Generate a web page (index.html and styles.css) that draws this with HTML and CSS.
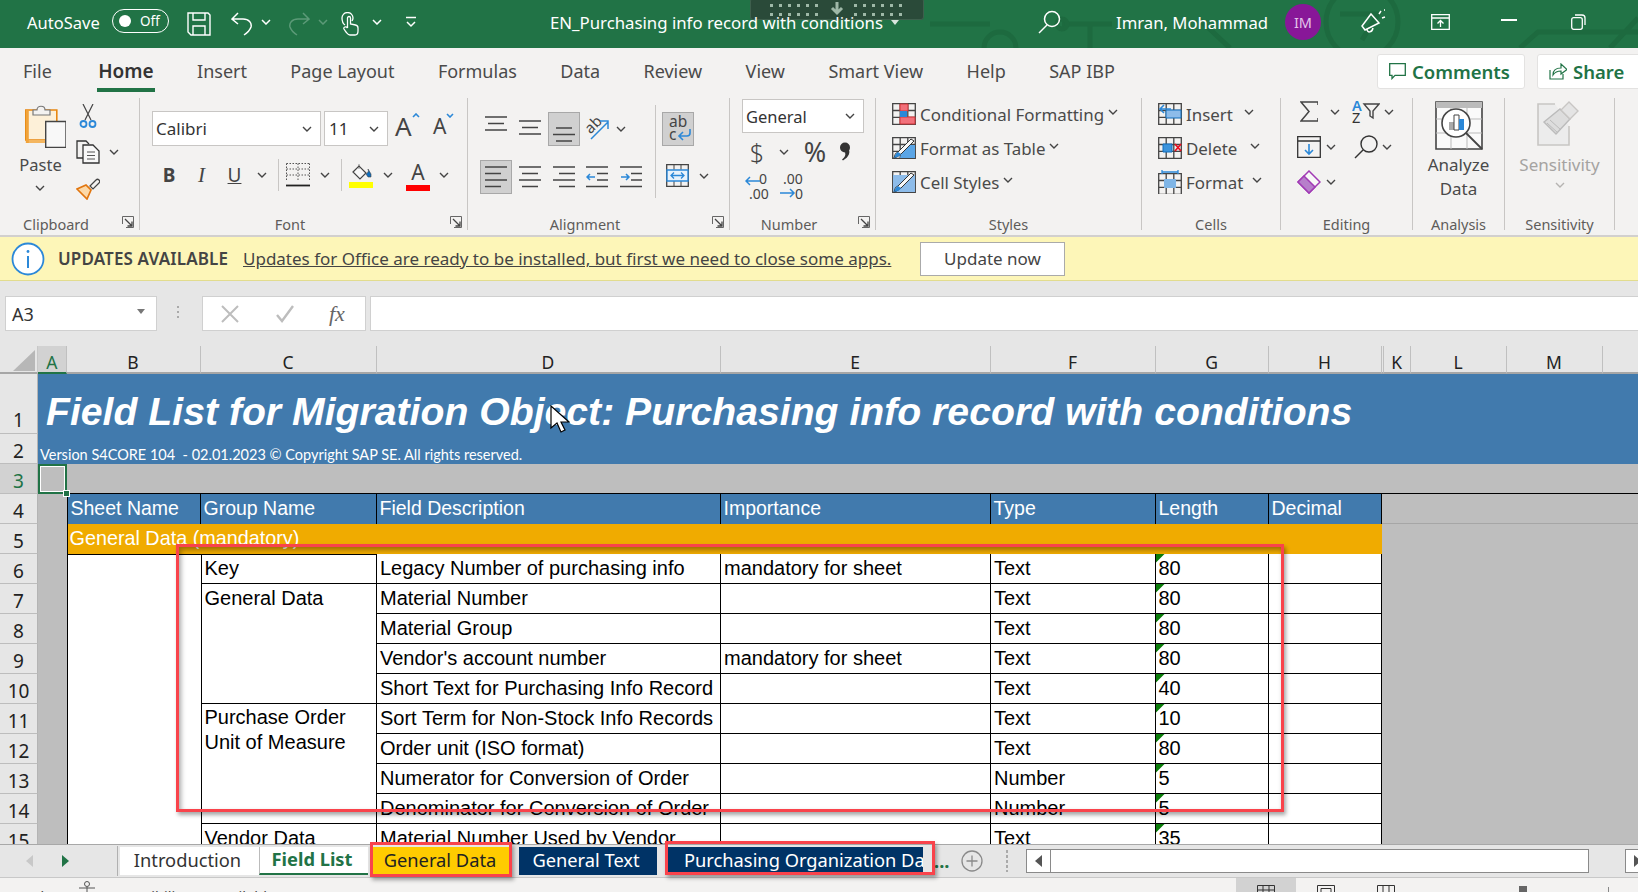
FILE: index.html
```html
<!DOCTYPE html>
<html lang="en">
<head>
<meta charset="utf-8">
<title>EN_Purchasing info record with conditions</title>
<link rel="stylesheet" href="styles.css">
</head>
<body>
<svg class="defs" width="0" height="0" aria-hidden="true">
  <symbol id="chev" viewBox="0 0 10 6"><path d="M1 1l4 4 4-4" fill="none" stroke="#444" stroke-width="1.4"/></symbol>
  <symbol id="chevw" viewBox="0 0 10 6"><path d="M1 1l4 4 4-4" fill="none" stroke="#fff" stroke-width="1.5"/></symbol>
  <symbol id="launch" viewBox="0 0 12 12"><path d="M.5 8V.5H11.5V11.500H4" fill="none" stroke="#666" stroke-width="1"/><path d="M3 3l7 7M10 5.500V10H5.500" fill="none" stroke="#444" stroke-width="1.300"/></symbol>
  <symbol id="gridi" viewBox="0 0 24 22"><path d="M.7.7h22.600v20.600H.7zM.7 7.500h22.600M.7 14.300h22.600M8.200.7v20.600M15.800.7v20.600" fill="none" stroke="#444" stroke-width="1.300"/></symbol>
</svg>

<header class="titlebar">
  <svg class="circuit" viewBox="0 0 1638 48" aria-hidden="true"><g fill="none" stroke="#1d6a3f" stroke-width="5"><path d="M930 24h60M1062 24h50M1090 24v24M1200 20l30 28"/><circle cx="1000" cy="48" r="16"/><circle cx="1062" cy="24" r="5"/><circle cx="1362" cy="22" r="36"/><path d="M1340 14h38l-16 26M1520 48l18-16h100M1610 48l28-30"/></g></svg>
  <div class="dlpanel" aria-hidden="true"><span class="dots"></span><svg class="dlarrow" width="16" height="14" viewBox="0 0 16 14"><path d="M8 0v10M3 6l5 5 5-5" fill="none" stroke="#9fb8a8" stroke-width="3"/></svg><span class="dots"></span></div>
  <span class="autosave">AutoSave</span>
  <span class="toggle"><i class="knob"></i><b>Off</b></span>
  <svg class="q-save" width="24" height="24" viewBox="0 0 24 24"><path d="M1 1h20l2 2v20H4l-3-3zM6 1v7h12V1M6 23v-9h12v9" fill="none" stroke="#fff" stroke-width="1.400"/></svg>
  <svg class="q-undo" width="22" height="24" viewBox="0 0 22 24"><path d="M7 1L1 7l6 5M1 7h11c6 0 9 4 8 8-1 3-4 6-7 8" fill="none" stroke="#fff" stroke-width="1.500"/></svg>
  <svg class="q-ch1" width="10" height="6"><use href="#chevw"/></svg>
  <svg class="q-redo" width="22" height="24" viewBox="0 0 22 24"><path d="M15 1l6 6-6 5M21 7H10C4 7 1 11 2 15c1 3 4 6 7 8" fill="none" stroke="#5c9a78" stroke-width="1.500"/></svg>
  <svg class="q-ch2" width="10" height="6" viewBox="0 0 10 6"><path d="M1 1l4 4 4-4" fill="none" stroke="#5c9a78" stroke-width="1.500"/></svg>
  <svg class="q-touch" width="18" height="24" viewBox="0 0 18 24"><path d="M4 13C1 11 1 8 1 6a5.500 5.500 0 0 1 11 0c0 1-.3 2-1 3M6.500 16V6a1.500 1.500 0 0 1 3 0v6l5 1c2 .5 2.500 2 2.500 3v3c0 2-1 4-3 4H9c-2 0-3-2-4-3l-2-3c-1-2 2-3 3.500-1" fill="none" stroke="#fff" stroke-width="1.300"/></svg>
  <svg class="q-ch3" width="10" height="6"><use href="#chevw"/></svg>
  <svg class="q-cust" width="12" height="12" viewBox="0 0 12 12"><path d="M1 1.500h10" stroke="#fff" stroke-width="1.500"/><path d="M2 6l4 4 4-4" fill="none" stroke="#fff" stroke-width="1.500"/></svg>
  <span class="doc">EN_Purchasing info record with conditions</span>
  <svg class="q-tri" width="8" height="5" viewBox="0 0 8 5"><path d="M0 0h8L4 5z" fill="#d8e6de"/></svg>
  <svg class="q-search" width="23" height="24" viewBox="0 0 23 24"><circle cx="14" cy="9" r="7.500" fill="none" stroke="#fff" stroke-width="1.500"/><path d="M9 15l-8 8" stroke="#fff" stroke-width="1.500"/></svg>
  <span class="user">Imran, Mohammad</span>
  <span class="avatar">IM</span>
  <svg class="q-feed" width="25" height="26" viewBox="0 0 25 26"><path d="M10 5l8 9-14 7-3-4zM6 20c0 4 5 4 6-1" fill="none" stroke="#fff" stroke-width="1.500"/><path d="M18 5l2-3M21 9l3-1M23 1h1" stroke="#fff" stroke-width="1.500"/></svg>
  <svg class="q-disp" width="19" height="16" viewBox="0 0 19 16"><path d="M.7.7h17.600v14.600H.7zM.7 4h17.600" fill="none" stroke="#fff" stroke-width="1.300"/><path d="M9.500 13V6.500M6.500 9.500l3-3 3 3" fill="none" stroke="#fff" stroke-width="1.300"/></svg>
  <span class="q-min"></span>
  <svg class="q-rest" width="15" height="16" viewBox="0 0 15 16"><rect x=".7" y="3.700" width="10.600" height="11.600" rx="2" fill="none" stroke="#fff" stroke-width="1.300"/><path d="M4 1h7c2 0 3 1 3 3v7" fill="none" stroke="#fff" stroke-width="1.300"/></svg>
</header>

<nav class="tabs">
  <a class="tab">File</a><a class="tab active">Home</a><a class="tab">Insert</a><a class="tab">Page Layout</a><a class="tab">Formulas</a><a class="tab">Data</a><a class="tab">Review</a><a class="tab">View</a><a class="tab">Smart View</a><a class="tab">Help</a><a class="tab">SAP IBP</a>
  <button class="pill pill-comments"><svg width="17" height="17" viewBox="0 0 17 17"><path d="M.7.7h15.600v11.600H6L3 15.500v-3.200H.7z" fill="none" stroke="#217346" stroke-width="1.300"/></svg>Comments</button>
  <button class="pill pill-share"><svg width="18" height="17" viewBox="0 0 18 17"><path d="M1 7v9h13v-5M4 12c0-5 3-7 8-7V1l6 5.500L12 11V8c-3 0-6 1-8 4z" fill="none" stroke="#217346" stroke-width="1.200"/></svg>Share</button>
</nav>

<section class="ribbon">
  <div class="group g-clip">
    <div class="body clip-body">
      <div class="paste">
        <svg width="41" height="44" viewBox="0 0 41 44"><path d="M.8 6h31v30H.8z" fill="#fdf0d8" stroke="#e8870f" stroke-width="1.600"/><path d="M1 36h31v3H1z" fill="#f4b660"/><path d="M.8 6h3v33h-3z" fill="#f0a33a"/><path d="M8 11V6h4c0-5 8-5 8 0h5v5z" fill="#f3f2f1" stroke="#777" stroke-width="1.200"/><path d="M20.700 17.500H41v26H20.700z" fill="#f8f8f8" stroke="#444" stroke-width="1.400"/></svg>
        <span class="paste-t">Paste</span>
        <svg class="pch" width="10" height="6"><use href="#chev"/></svg>
      </div>
      <div class="clip-tools">
        <svg width="18" height="24" viewBox="0 0 18 24"><path d="M4 0l8 16M14 0L6 16" stroke="#444" stroke-width="1.200" fill="none"/><circle cx="4.500" cy="20" r="3" fill="none" stroke="#2b88d8" stroke-width="1.800"/><circle cx="13.500" cy="20" r="3" fill="none" stroke="#2b88d8" stroke-width="1.800"/></svg>
        <span></span>
        <svg width="25" height="24" viewBox="0 0 25 24"><path d="M7 18H1V1h9l3 3" fill="none" stroke="#333" stroke-width="1.300"/><path d="M7 5h10l6 6v12H7z" fill="#f8f8f8" stroke="#333" stroke-width="1.300"/><path d="M11 12h8M11 15.500h8M11 19h8" stroke="#555"/></svg>
        <svg width="10" height="6"><use href="#chev"/></svg>
        <svg width="24" height="23" viewBox="0 0 24 23"><path d="M1 12l10 10 4-9-5-5z" fill="#fcd9a8" stroke="#e1760f" stroke-width="1.700"/><path d="M14 9l6-6a2 2 0 0 1 3 3l-6 6z" fill="#f3f2f1" stroke="#444" stroke-width="1.200"/></svg>
        <span></span>
      </div>
    </div>
    <div class="foot"><span>Clipboard</span><svg class="launcher" width="12" height="12"><use href="#launch"/></svg></div>
  </div>

  <div class="group g-font">
    <div class="body font-body">
      <div class="font-top">
        <span class="sel sel-font">Calibri<svg width="10" height="6"><use href="#chev"/></svg></span>
        <span class="sel sel-size">11<svg width="10" height="6"><use href="#chev"/></svg></span>
        <span class="grow big">A<svg width="8" height="5" viewBox="0 0 8 5"><path d="M1 4l3-3 3 3" fill="none" stroke="#2b88d8" stroke-width="1.600"/></svg></span>
        <span class="grow small">A<svg width="8" height="5" viewBox="0 0 8 5"><path d="M1 1l3 3 3-3" fill="none" stroke="#2b88d8" stroke-width="1.600"/></svg></span>
      </div>
      <div class="font-bot">
        <b class="fb">B</b><i class="fi">I</i><u class="fu">U</u>
        <svg width="10" height="6"><use href="#chev"/></svg>
        <span class="vsep"></span>
        <svg width="24" height="24" viewBox="0 0 24 24"><path d="M.5.500h23M.5 6h23M.5 12h23M.5.5v18M12 .5v18M23.500.5v18" fill="none" stroke="#555" stroke-dasharray="1.500 1.500"/><path d="M0 22.500h24" stroke="#222" stroke-width="1.800"/></svg>
        <svg width="10" height="6"><use href="#chev"/></svg>
        <span class="vsep"></span>
        <svg width="24" height="25" viewBox="0 0 24 25"><path d="M4 9l6-6 7 7-6 6z" fill="#f8f8f8" stroke="#444" stroke-width="1.200"/><path d="M10 1v5M17 11c2-1 3-3 2-5l3 5v3h-3z" fill="#106ebe" stroke="#444" stroke-width=".6"/><path d="M0 19h24v6H0z" fill="#ff0"/></svg>
        <svg width="10" height="6"><use href="#chev"/></svg>
        <span class="fcolor">A</span>
        <svg width="10" height="6"><use href="#chev"/></svg>
      </div>
    </div>
    <div class="foot"><span>Font</span><svg class="launcher" width="12" height="12"><use href="#launch"/></svg></div>
  </div>

  <div class="group g-align">
    <div class="body align-body">
      <div class="align-left">
        <div class="a-row a-top">
          <svg class="at1" width="22" height="15" viewBox="0 0 22 15"><path d="M0 1h22M3 7.500h16M0 14h22" stroke="#444" stroke-width="1.300"/></svg>
          <svg class="at2" width="22" height="15" viewBox="0 0 22 15"><path d="M0 1h22M3 7.500h16M0 14h22" stroke="#444" stroke-width="1.300"/></svg>
          <span class="on"><svg width="22" height="15" viewBox="0 0 22 15"><path d="M3 1h16M0 7.500h22M3 14h16" stroke="#444" stroke-width="1.300"/></svg></span>
          <svg class="at2" width="26" height="26" viewBox="0 0 26 26"><text x="1" y="17" class="ori" transform="rotate(-45 8 12)">ab</text><path d="M7 25L24 8M16 7h8v8" fill="none" stroke="#2b88d8" stroke-width="1.500"/></svg>
          <svg width="10" height="6"><use href="#chev"/></svg>
        </div>
        <div class="a-row a-bot">
          <span class="on"><svg width="22" height="22" viewBox="0 0 22 22"><path d="M0 1h22M0 7.500h16M0 14h22M0 20.500h16" stroke="#444" stroke-width="1.300"/></svg></span>
          <svg width="22" height="22" viewBox="0 0 22 22"><path d="M0 1h22M3 7.500h16M0 14h22M3 20.500h16" stroke="#444" stroke-width="1.300"/></svg>
          <svg width="22" height="22" viewBox="0 0 22 22"><path d="M0 1h22M6 7.500h16M0 14h22M6 20.500h16" stroke="#444" stroke-width="1.300"/></svg>
          <svg width="22" height="22" viewBox="0 0 22 22"><path d="M0 1h22M11 7.500h11M11 14h11M0 20.500h22" stroke="#444" stroke-width="1.300"/><path d="M9 11H1M4 8l-3 3 3 3" fill="none" stroke="#2b88d8" stroke-width="1.500"/></svg>
          <svg width="22" height="22" viewBox="0 0 22 22"><path d="M0 1h22M11 7.500h11M11 14h11M0 20.500h22" stroke="#444" stroke-width="1.300"/><path d="M1 11h8M6 8l3 3-3 3" fill="none" stroke="#2b88d8" stroke-width="1.500"/></svg>
        </div>
      </div>
      <span class="vsep tall"></span>
      <div class="align-right">
        <span class="on wrap"><span class="wrap-ab">ab<br>c</span><svg width="14" height="12" viewBox="0 0 14 12"><path d="M13 0v4c0 2-1 3-3 3H2M6 3L2 7l4 4" fill="none" stroke="#2b88d8" stroke-width="1.600"/></svg></span>
        <div class="merge">
          <svg width="23" height="23" viewBox="0 0 23 23"><path d="M.7.7h21.600v21.600H.7z" fill="none" stroke="#444" stroke-width="1.300"/><path d="M8 .7v5M15 .7v5M8 17v5M15 17v5" stroke="#444"/><path d="M1 6h21v11H1z" fill="#e8f2fb" stroke="#2b88d8" stroke-width="1.400"/><path d="M5 11.500h13M8 8.500l-3 3 3 3M15 8.500l3 3-3 3" fill="none" stroke="#2b88d8" stroke-width="1.300"/></svg>
          <svg width="10" height="6"><use href="#chev"/></svg>
        </div>
      </div>
    </div>
    <div class="foot"><span>Alignment</span><svg class="launcher" width="12" height="12"><use href="#launch"/></svg></div>
  </div>

  <div class="group g-num">
    <div class="body num-body">
      <span class="sel sel-num">General<svg width="10" height="6"><use href="#chev"/></svg></span>
      <div class="num-row">
        <span class="sym dollar">$</span>
        <svg width="10" height="6"><use href="#chev"/></svg>
        <span class="sym pct">%</span>
        <svg width="12" height="19" viewBox="0 0 12 19"><circle cx="6" cy="5.500" r="5" fill="#333"/><path d="M9 6c3 4 1 9-5 12.500l-1-1c3-2 4-5 3-7z" fill="#333"/></svg>
      </div>
      <div class="dec-row">
        <svg width="26" height="27" viewBox="0 0 26 27"><text x="14" y="11" class="dec">0</text><text x="4" y="26" class="dec">.00</text><path d="M15 8H1M5 4L1 8l4 4" fill="none" stroke="#2b88d8" stroke-width="1.500"/></svg>
        <svg width="26" height="27" viewBox="0 0 26 27"><text x="4" y="11" class="dec">.00</text><text x="16" y="26" class="dec">0</text><path d="M1 20h14M11 16l4 4-4 4" fill="none" stroke="#2b88d8" stroke-width="1.500"/></svg>
      </div>
    </div>
    <div class="foot"><span>Number</span><svg class="launcher" width="12" height="12"><use href="#launch"/></svg></div>
  </div>

  <div class="group g-styles">
    <div class="body list">
      <div class="li"><svg width="24" height="22" viewBox="0 0 24 22"><use href="#gridi"/><path d="M8 1h8v7H8zM8 14h15v7H8z" fill="#f2707a" stroke="#d13438"/><path d="M8 8h7v6H8z" fill="#2b88d8"/></svg><span>Conditional Formatting</span><svg width="10" height="6"><use href="#chev"/></svg></div>
      <div class="li"><svg width="24" height="22" viewBox="0 0 24 22"><use href="#gridi"/><path d="M12 8h11v13H8z" fill="#5aa5e6"/><path d="M22 4L9 17c-2 1-3 3-7 4 1-3 1-5 4-6L19 2z" fill="#f8f8f8" stroke="#333"/><path d="M2 21c1-3 2-5 4-6l3 2c-1 2-3 3-7 4z" fill="#2b88d8"/></svg><span>Format as Table</span><svg width="10" height="6"><use href="#chev"/></svg></div>
      <div class="li"><svg width="24" height="22" viewBox="0 0 24 22"><use href="#gridi"/><path d="M1 4h22v17H1z" fill="#8dbcea"/><path d="M22 4L9 17c-2 1-3 3-7 4 1-3 1-5 4-6L19 2z" fill="#f8f8f8" stroke="#333"/><path d="M2 21c1-3 2-5 4-6l3 2c-1 2-3 3-7 4z" fill="#2b88d8"/></svg><span>Cell Styles</span><svg width="10" height="6"><use href="#chev"/></svg></div>
    </div>
    <div class="foot"><span>Styles</span></div>
  </div>

  <div class="group g-cells">
    <div class="body list">
      <div class="li"><svg width="24" height="22" viewBox="0 0 24 22"><use href="#gridi"/><path d="M8 7h15v8H8z" fill="#8dbcea" stroke="#106ebe"/><path d="M13 6H2M6 2L2 6l4 4" fill="none" stroke="#2b88d8" stroke-width="1.600"/></svg><span class="t-ins">Insert</span><svg width="10" height="6"><use href="#chev"/></svg></div>
      <div class="li"><svg width="24" height="22" viewBox="0 0 24 22"><use href="#gridi"/><path d="M5 7h9v8H5z" fill="#3d94dc" stroke="#106ebe"/><path d="M17 7l6 7M23 7l-6 7" stroke="#e81123" stroke-width="1.800"/></svg><span class="t-del">Delete</span><svg width="10" height="6"><use href="#chev"/></svg></div>
      <div class="li"><svg width="24" height="24" viewBox="0 0 24 24"><g transform="translate(0 2)"><use href="#gridi"/></g><path d="M6 9h12v9H6z" fill="#7fb5e6"/><path d="M4 2h16M4 0v4M20 0v4" stroke="#2b88d8" stroke-width="1.300"/></svg><span class="t-fmt">Format</span><svg width="10" height="6"><use href="#chev"/></svg></div>
    </div>
    <div class="foot"><span>Cells</span></div>
  </div>

  <div class="group g-edit">
    <div class="body edit-body">
      <div class="e-row e1">
        <svg width="18" height="21" viewBox="0 0 18 21"><path d="M18 4V1H1l8 9.500L1 20h17v-3" fill="none" stroke="#444" stroke-width="1.500"/></svg>
        <svg width="10" height="6"><use href="#chev"/></svg>
        <svg width="28" height="24" viewBox="0 0 28 24"><text x="0" y="11" class="az blue">A</text><text x="0" y="23" class="az">Z</text><path d="M12 4h15l-6 7v7l-3-2v-5z" fill="none" stroke="#444" stroke-width="1.400"/></svg>
        <svg width="10" height="6"><use href="#chev"/></svg>
      </div>
      <div class="e-row e2">
        <svg width="24" height="22" viewBox="0 0 24 22"><path d="M.7.7h22.600v20.600H.7zM.7 5h22.600" fill="none" stroke="#333" stroke-width="1.300"/><path d="M12 8v10M8 14l4 4 4-4" fill="none" stroke="#2b88d8" stroke-width="1.600"/></svg>
        <svg width="10" height="6"><use href="#chev"/></svg>
        <span></span>
        <svg width="24" height="24" viewBox="0 0 24 24"><circle cx="15" cy="9" r="8" fill="none" stroke="#333" stroke-width="1.400"/><path d="M9 15l-8 8" stroke="#333" stroke-width="1.500"/></svg>
        <svg width="10" height="6"><use href="#chev"/></svg>
      </div>
      <div class="e-row e2">
        <svg width="24" height="24" viewBox="0 0 24 24"><path d="M12 1l11 11-11 11L1 12z" fill="#f8f8f8" stroke="#a13ab5" stroke-width="1.500"/><path d="M1 12l6-6 11 11-6 6z" fill="#b77fcb" stroke="#a13ab5" stroke-width="1.500"/></svg>
        <svg width="10" height="6"><use href="#chev"/></svg>
      </div>
    </div>
    <div class="foot"><span>Editing</span></div>
  </div>

  <div class="group g-an">
    <div class="body big-body">
      <svg width="48" height="49" viewBox="0 0 48 49"><path d="M1 1h46v47H1z" fill="#fafafa" stroke="#444" stroke-width="1.600"/><path d="M1 1h46v6H1z" fill="#bbb"/><path d="M1 18h46M1 32h46M16 7v41M32 7v41" stroke="#bbb"/><circle cx="21" cy="22" r="14" fill="#fff" stroke="#444" stroke-width="1.600"/><path d="M14 21h5v8h-5z" fill="#aaa"/><path d="M19 14h5v15h-5z" fill="#fff" stroke="#444"/><path d="M24 18h5v11h-5z" fill="#2b88d8"/><path d="M31 32l16 16" stroke="#444" stroke-width="1.800"/></svg>
      <span class="big-t">Analyze<br>Data</span>
    </div>
    <div class="foot"><span>Analysis</span></div>
  </div>

  <div class="group g-sens">
    <div class="body big-body">
      <svg width="42" height="45" viewBox="0 0 42 45"><path d="M18 3H1v41h31V25" fill="#ececec" stroke="#c8c6c4" stroke-width="1.600"/><path d="M7 21L23 8l10 10-14 15z" fill="#ddd" stroke="#bbb" stroke-width="1.400"/><path d="M10 22l11 10M13 19l11 10" stroke="#bbb"/><path d="M24 9l8-8 9 9-8 8z" fill="#e4e4e4" stroke="#c8c6c4" stroke-width="1.400"/></svg>
      <span class="big-t muted">Sensitivity</span>
      <svg class="sens-ch" width="10" height="6" viewBox="0 0 10 6"><path d="M1 1l4 4 4-4" fill="none" stroke="#b5b3b1" stroke-width="1.400"/></svg>
    </div>
    <div class="foot"><span>Sensitivity</span></div>
  </div>
</section>

<section class="notice">
  <svg width="34" height="34" viewBox="0 0 34 34"><circle cx="17" cy="17" r="15.500" fill="#fff" stroke="#2b88d8" stroke-width="1.800"/><path d="M17 14v12" stroke="#2b88d8" stroke-width="2"/><circle cx="17" cy="9.500" r="1.400" fill="#2b88d8"/></svg>
  <strong>UPDATES AVAILABLE</strong>
  <a class="notice-link">Updates for Office are ready to be installed, but first we need to close some apps.</a>
  <button class="notice-btn">Update now</button>
</section>

<section class="formula">
  <div class="namebox"><span>A3</span><svg width="8" height="5" viewBox="0 0 8 5"><path d="M0 0h8L4 5z" fill="#777"/></svg></div>
  <span class="fdots"></span>
  <div class="fxbox">
    <svg width="18" height="18" viewBox="0 0 18 18"><path d="M1 1l16 16M17 1L1 17" stroke="#bdbdbd" stroke-width="2"/></svg>
    <svg width="20" height="18" viewBox="0 0 20 18"><path d="M2 10l5 6L18 1" fill="none" stroke="#bdbdbd" stroke-width="2.400"/></svg>
    <i class="fx">fx</i>
  </div>
  <div class="finput"></div>
</section>

<main class="sheet">
  <div class="corner"><i></i></div>
  <div class="ch-cell ch-on">A</div><div class="ch-cell">B</div><div class="ch-cell">C</div><div class="ch-cell">D</div><div class="ch-cell">E</div><div class="ch-cell">F</div><div class="ch-cell">G</div><div class="ch-cell">H</div><div class="ch-cell"></div><div class="ch-cell">K</div><div class="ch-cell">L</div><div class="ch-cell">M</div><div class="ch-cell ch-end"></div>

  <div class="rh rh-1">1</div>
  <div class="banner title">Field List for Migration Object: Purchasing info record with conditions</div>
  <div class="rh">2</div>
  <div class="banner version">Version S4CORE 104&nbsp; - 02.01.2023 © Copyright SAP SE. All rights reserved.</div>
  <div class="rh rh-on">3</div>
  <div class="a3"><i></i></div>
  <div class="row3"></div>
  <div class="rh">4</div>
  <div class="gray-a"></div>
  <div class="hd hb">Sheet Name</div><div class="hd">Group Name</div><div class="hd">Field Description</div><div class="hd">Importance</div><div class="hd">Type</div><div class="hd">Length</div><div class="hd">Decimal</div>
  <div class="gray-r4"></div>
  <div class="rh">5</div>
  <div class="orange">General Data (mandatory)</div>
  <div class="gray-r"></div>
  <div class="blank-b"></div>

  <div class="grp g1">Key</div>
  <div class="grp g2">General Data</div>
  <div class="grp g3">Purchase Order<br>Unit of Measure</div>
  <div class="grp g4">Vendor Data</div>

  <div class="rh">6</div><div class="c cd">Legacy Number of purchasing info</div><div class="c ce">mandatory for sheet</div><div class="c cf">Text</div><div class="c cg">80</div><div class="c cx"></div>
  <div class="rh">7</div><div class="c cd">Material Number</div><div class="c ce"></div><div class="c cf">Text</div><div class="c cg">80</div><div class="c cx"></div>
  <div class="rh">8</div><div class="c cd">Material Group</div><div class="c ce"></div><div class="c cf">Text</div><div class="c cg">80</div><div class="c cx"></div>
  <div class="rh">9</div><div class="c cd">Vendor's account number</div><div class="c ce">mandatory for sheet</div><div class="c cf">Text</div><div class="c cg">80</div><div class="c cx"></div>
  <div class="rh">10</div><div class="c cd">Short Text for Purchasing Info Record</div><div class="c ce"></div><div class="c cf">Text</div><div class="c cg">40</div><div class="c cx"></div>
  <div class="rh">11</div><div class="c cd">Sort Term for Non-Stock Info Records</div><div class="c ce"></div><div class="c cf">Text</div><div class="c cg">10</div><div class="c cx"></div>
  <div class="rh">12</div><div class="c cd">Order unit (ISO format)</div><div class="c ce"></div><div class="c cf">Text</div><div class="c cg">80</div><div class="c cx"></div>
  <div class="rh">13</div><div class="c cd">Numerator for Conversion of Order</div><div class="c ce"></div><div class="c cf">Number</div><div class="c cg">5</div><div class="c cx"></div>
  <div class="rh">14</div><div class="c cd">Denominator for Conversion of Order</div><div class="c ce"></div><div class="c cf">Number</div><div class="c cg">5</div><div class="c cx"></div>
  <div class="rh">15</div><div class="c cd">Material Number Used by Vendor</div><div class="c ce"></div><div class="c cf">Text</div><div class="c cg">35</div><div class="c cx"></div>
</main>

<footer class="sheetbar">
  <svg class="nav-l" width="7" height="12" viewBox="0 0 7 12"><path d="M7 0v12L0 6z" fill="#c8c8c8"/></svg>
  <svg class="nav-r" width="7" height="12" viewBox="0 0 7 12"><path d="M0 0v12l7-6z" fill="#217346"/></svg>
  <span class="bar-sep"></span>
  <span class="stab st-intro">Introduction</span>
  <span class="stab st-field">Field List</span>
  <span class="stab st-gen">General Data</span>
  <span class="stab st-txt">General Text</span>
  <span class="stab st-org"><span>Purchasing Organization Data</span></span>
  <span class="more">...</span>
  <svg class="addsheet" width="22" height="22" viewBox="0 0 22 22"><circle cx="11" cy="11" r="10" fill="none" stroke="#8a8a8a" stroke-width="1.300"/><path d="M11 5.500v11M5.500 11h11" stroke="#8a8a8a" stroke-width="1.300"/></svg>
  <span class="vdots"></span>
  <div class="hscroll"><span class="hs-btn"><svg width="7" height="12" viewBox="0 0 7 12"><path d="M7 0v12L0 6z" fill="#555"/></svg></span></div>
  <span class="hs-end"><svg width="7" height="12" viewBox="0 0 7 12"><path d="M0 0v12l7-6z" fill="#555"/></svg></span>
</footer>

<footer class="status">
  <span class="st-ready">Ready</span>
  <svg class="st-acc" width="18" height="14" viewBox="0 0 18 14"><circle cx="9" cy="3" r="2.500" fill="none" stroke="#555"/><path d="M1 7h16M9 6v8" stroke="#555"/></svg>
  <span class="st-text">Accessibility: Unavailable</span>
  <span class="view view-on"><svg width="18" height="14" viewBox="0 0 18 14"><path d="M.5.5h17v13H.5zM.5 5h17M6 .5v13M12 .5v13" fill="none" stroke="#333"/></svg></span>
  <span class="view"><svg width="18" height="14" viewBox="0 0 18 14"><path d="M.5.5h17v13H.5zM4 3.500h10v10H4z" fill="none" stroke="#333"/></svg></span>
  <span class="view"><svg width="18" height="14" viewBox="0 0 18 14"><path d="M.5.5h17v13H.5zM6 .5v13M12 .5v13" fill="none" stroke="#333"/></svg></span>
  <span class="knob2"></span>
  <span class="tick"></span>
</footer>

<div class="hl hl-main"></div>
<div class="hl hl-tab1"></div>
<div class="hl hl-tab2"></div>
<svg class="cursor" width="20" height="28" viewBox="0 0 20 28" aria-hidden="true"><path d="M1 1v22l6-5 4 9 4-2-4-8h8z" fill="#fff" stroke="#000" stroke-width="1.200"/></svg>
</body>
</html>
```
FILE: styles.css
```css
* { box-sizing: border-box; }
html, body { margin: 0; padding: 0; }
body {
  position: relative;
  width: 1638px;
  height: 892px;
  overflow: hidden;
  background: #e6e6e6;
  font-family: "Noto Sans", "Open Sans", sans-serif;
  color: #444;
}
.defs { position: absolute; }
svg { display: block; flex: none; }

/* title bar */
.titlebar {
  position: relative;
  height: 48px;
  background: #217346;
  color: #fff;
  display: flex;
  align-items: center;
  overflow: hidden;
  padding-bottom: 4px;
}
.titlebar > * { flex: none; }
.titlebar > *:not(.circuit):not(.dlpanel) { position: relative; }
.circuit { position: absolute; left: 0; top: 0; width: 1638px; height: 48px; }
.dlpanel {
  position: absolute;
  left: 750px;
  top: -2px;
  width: 174px;
  height: 22px;
  background: #2a4a39;
  border: 1px solid #3e5f4d;
  border-radius: 3px;
  display: flex;
  align-items: center;
  justify-content: center;
  gap: 6px;
}
.dots {
  width: 56px;
  height: 16px;
  background-image: radial-gradient(circle, #9fb8a8 1.700px, transparent 2px);
  background-size: 9px 9px;
}
.autosave { margin-left: 27px; width: 76px; font-size: 16.500px; white-space: nowrap; }
.toggle {
  margin-left: 9px; width: 57px; height: 24px; margin-bottom: 2px;
  border: 1.300px solid #fff; border-radius: 12px;
  display: flex; align-items: center; padding-left: 6px;
}
.knob { width: 12px; height: 12px; border-radius: 50%; background: #fff; }
.toggle b { font-weight: 400; font-size: 13.500px; margin-left: 9px; }
.q-save { margin-left: 18px; margin-top: 4px; }
.q-undo { margin-left: 20px; margin-top: 4px; }
.q-ch1 { margin-left: 8px; }
.q-redo { margin-left: 17px; margin-top: 4px; }
.q-ch2 { margin-left: 8px; }
.q-touch { margin-left: 13px; margin-top: 4px; }
.q-ch3 { margin-left: 13px; }
.q-cust { margin-left: 23px; }
.doc { margin-left: 133px; width: 333px; font-size: 16.800px; white-space: nowrap; }
.q-tri { margin-left: 8px; }
.q-search { margin-left: 139px; }
.user { margin-left: 55px; width: 152px; font-size: 16.700px; white-space: nowrap; }
.avatar {
  margin-left: 17px; width: 36px; height: 36px; border-radius: 50%;
  background: #881798; color: #e3c4ea; font-size: 14.500px;
  display: flex; align-items: center; justify-content: center;
}
.q-feed { margin-left: 40px; }
.q-disp { margin-left: 45px; }
.q-min { margin-left: 51px; width: 16px; height: 2px; background: #fff; margin-bottom: 4px; }
.q-rest { margin-left: 54px; }

/* tabs */
.tabs {
  height: 48px;
  background: #f3f2f1;
  display: flex;
  align-items: center;
  padding-left: 23px;
  gap: 43.400px;
  font-size: 18px;
  color: #4a4a4a;
  position: relative;
}
.tabs > * { flex: none; }
.tab { white-space: nowrap; position: relative; line-height: 30px; margin-top: -3px; }
.tab.active { font-weight: 600; color: #333; font-size: 19px; margin-left: 3px; }
.tab.active::after {
  content: ""; position: absolute; left: -1px; right: -1px; top: 32px; height: 4px; background: #217346;
}
.pill {
  height: 35px; background: #fff; border: 1px solid #e3e2e1; border-radius: 3px;
  font: 600 18.500px "Noto Sans", sans-serif; color: #217346;
  display: flex; align-items: center; gap: 6px; margin-top: -1px;
}
.pill-comments { width: 148px; margin-left: auto; padding-left: 11px; }
.pill-share { width: 110px; margin-left: -31.400px; margin-right: -9px; padding-left: 11px; }

/* ribbon */
.ribbon {
  height: 141px;
  background: #f3f2f1;
  border-bottom: 2px solid #d2d0ce;
  display: flex;
  padding-top: 2px;
}
.group {
  height: 132px;
  border-right: 1px solid #c8c6c4;
  display: flex;
  flex-direction: column;
  flex: none;
}
.body { height: 116px; flex: none; }
.foot {
  height: 20px; flex: none; display: flex; align-items: center; font-size: 14.500px; color: #5e5c5a; white-space: nowrap;
}
.foot > span { flex: 1; text-align: center; }
.launcher { margin-right: 5px; margin-left: 10px; margin-top: -5px; }
.g-clip { width: 140px; }
.g-font { width: 328px; }
.g-align { width: 262px; }
.g-num { width: 146px; }
.g-styles { width: 266px; }
.g-cells { width: 139px; }
.g-edit { width: 132px; }
.g-an { width: 92px; }
.g-sens { width: 110px; }

.clip-body { display: flex; padding-left: 20px; }
.paste { width: 50px; display: flex; flex-direction: column; align-items: center; padding-top: 6px; }
.paste-t { font-size: 16.500px; margin-top: 4px; line-height: 26px; margin-left: -9px; color: #4a4a4a; }
.pch { margin: 7px 0 0 -10px; }
.clip-tools { display: grid; grid-template-columns: 36px 16px; grid-auto-rows: 36px; place-items: center; }

.font-body { padding: 13px 0 0 12px; }
.font-top { display: flex; align-items: center; height: 35px; }
.sel {
  background: #fff; border: 1px solid #c8c6c4; display: flex; align-items: center; justify-content: space-between;
  font-size: 17px; color: #333; padding: 0 8px 0 3px; height: 35px;
}
.sel-font { width: 169px; }
.sel-size { width: 64px; margin-left: 3px; padding-left: 4px; }
.grow { display: flex; align-items: flex-start; color: #444; line-height: 34px; margin-top: -6px; }
.grow svg { margin-top: 4px; }
.grow.big { font-size: 26px; margin-left: 7px; width: 30px; }
.grow.small { font-size: 21px; margin-left: 8px; }
.font-bot {
  display: grid; margin-top: 12px; height: 34px; margin-left: 1px;
  grid-template-columns: 32px 33px 33px 22px 10px 30px 24px 8px 32px 22px 38px 14px;
  place-items: center; font-size: 19px; color: #444;
}
.vsep { width: 1px; height: 32px; background: #c8c6c4; display: block; }
.fcolor {
  font-size: 21px; line-height: 24px; width: 24px; text-align: center; border-bottom: 6px solid #f00; height: 31px;
}
.fb { font-weight: 700; font-family: "Noto Sans", sans-serif; }
.fi { font-family: "Liberation Serif", serif; font-size: 21px; }

.align-body { display: flex; }
.align-left { margin-left: 12px; width: 170px; padding-top: 14px; }
.a-row { display: grid; place-items: center; height: 34px; }
.a-top { grid-template-columns: 32px 36px 32px 34px 14px; }
.a-bot { margin-top: 14px; grid-template-columns: 32px 36px 32px 34px 34px; }
.at1 { margin-bottom: 12px; }
.at2 { margin-bottom: 4px; }
.on {
  width: 32px; height: 34px; background: #d0d0d0; border: 1px solid #a8a8a8;
  display: flex; align-items: center; justify-content: center;
}
.a-top .on svg { margin-top: 10px; }
.tall { height: 93px; margin: 7px 0 0 5px; }
.align-right { padding: 14px 0 0 6px; }
.wrap { flex-direction: column; font-size: 15.500px; line-height: 13px; color: #444; align-items: flex-start; padding-left: 6px; position: relative; }
.wrap-ab { margin-top: -2px; }
.wrap svg { position: absolute; left: 14px; top: 16px; }
.merge { display: flex; align-items: center; gap: 10px; margin: 18px 0 0 4px; }
.ori { font: 15px "Noto Sans", sans-serif; fill: #444; }

.g-num .body { height: 115px; }
.num-body { padding-left: 12px; margin-top: 1px; }
.sel-num { width: 122px; height: 34px; font-size: 16.500px; }
.num-row { display: grid; grid-template-columns: 30px 24px 38px 22px; place-items: center; height: 37px; }
.sym { color: #444; }
.dollar { font-size: 25px; font-weight: 300; }
.pct { font-size: 27px; }
.dec-row { display: flex; gap: 8px; padding-left: 3px; margin-top: 3px; }
.dec { font: 14px "Noto Sans", sans-serif; fill: #444; }

.list { padding: 0 0 0 16px; margin-top: -1px; height: 117px; }
.li { display: flex; align-items: center; height: 34px; gap: 4px; font-size: 16.900px; color: #4a4a4a; white-space: nowrap; }
.li > svg:last-child { margin-left: 0; margin-top: -4px; }
.t-ins { width: 54px; }
.t-del { width: 60px; }
.t-fmt { width: 62px; }

.edit-body { padding: 0 0 0 14px; margin-top: -4px; height: 120px; }
.e-row { display: grid; place-items: center; height: 35px; }
.e1 { grid-template-columns: 28px 24px 38px 8px; }
.e2 { grid-template-columns: 28px 16px 10px 34px 8px; }
.az { font: 14.500px "Noto Sans", sans-serif; fill: #333; }
.blue { fill: #2b88d8; font-weight: 600; }

.big-body { display: flex; flex-direction: column; align-items: center; padding-top: 3px; }
.big-t { font-size: 17px; line-height: 24px; text-align: center; margin-top: 3px; color: #4a4a4a; }
.muted { color: #a5a3a1; margin-top: 7px; }
.sens-ch { margin-top: 5px; }
.g-sens .big-body svg:first-child { margin-left: -4px; }

/* notice */
.notice {
  height: 44px;
  background: #fdf6b8;
  border-bottom: 1px solid #e2dc8e;
  display: flex;
  align-items: center;
  padding-left: 11px;
  font-size: 17px;
  color: #444;
  white-space: nowrap;
}
.notice strong { font-weight: 600; margin-left: 13px; width: 175px; letter-spacing: .15px; }
.notice-link { margin-left: 10px; width: 647px; text-decoration: underline; }
.notice-btn {
  margin-left: 30px; width: 145px; height: 34px; background: #fff; border: 1px solid #aaa;
  font: 17px "Noto Sans", sans-serif; color: #444;
}

/* formula bar */
.formula {
  height: 65px;
  display: flex;
  padding: 15px 0 15px 5px;
  background: #e6e6e6;
}
.namebox {
  width: 152px; background: #fff; border: 1px solid #d0d0d0; display: flex; align-items: center;
  justify-content: space-between; padding: 0 11px 0 6px; font-size: 18px; color: #333;
}
.namebox svg { margin-top: -4px; }
.fdots {
  width: 2px; height: 14px; margin: 10px 23px 0 20px;
  background-image: linear-gradient(#aaa 50%, transparent 50%); background-size: 2px 5px;
}
.fxbox {
  width: 164px; background: #fff; border: 1px solid #d0d0d0; display: flex; align-items: center;
  padding-left: 18px; gap: 36px;
}
.fx { font: italic 22px "Liberation Serif", serif; color: #666; margin-left: -2px; }
.finput { flex: 1; margin-left: 4px; background: #fff; border: 1px solid #d0d0d0; border-right: 0; }

/* sheet */
.sheet {
  height: 498px;
  overflow: hidden;
  display: grid;
  grid-template-columns: 38px 28.500px 134px 176px 344px 270px 165px 113px 113px 2.500px 26.500px 96px 96px 35.500px;
  grid-template-rows: 28px 60px repeat(14, 30px);
  font-family: "Liberation Sans", Arial, sans-serif;
  font-size: 20px;
  background: #bebebe;
  color: #000;
}
.corner { background: #e6e6e6; border-bottom: 2px solid #a6a6a6; border-right: 1px solid #c8c8c8; position: relative; }
.corner i { position: absolute; left: 13px; top: 4px; width: 22px; height: 21px; background: #b7b7b7; clip-path: polygon(100% 0, 100% 100%, 0 100%); }
.ch-cell {
  background: #e6e6e6; border-bottom: 2px solid #a6a6a6; border-right: 1px solid #c0c0c0;
  display: flex; align-items: center; justify-content: center;
  font: 17.500px "Noto Sans", sans-serif; color: #222; padding-top: 5px;
}
.ch-on { background: #d2d2d2; color: #217346; border-bottom-color: #217346; }
.ch-end { border-right: 0; }
.rh {
  grid-column: 1;
  background: #e6e6e6; border-bottom: 1px solid #bdbdbd; border-right: 1px solid #b4b4b4;
  display: flex; align-items: flex-end; justify-content: center;
  font: 19px/24px "Noto Sans", sans-serif; color: #222;
}
.rh-1 { line-height: 26px; }
.rh-on { background: #d2d2d2; color: #217346; }
.banner { grid-column: 2 / -1; background: #417aad; color: #fff; white-space: nowrap; }
.title {
  font: italic 700 39.200px/52px "Liberation Sans", Arial, sans-serif; padding: 12px 0 0 8px;
}
.version { font: 14.500px/30px Lato, sans-serif; padding: 6px 0 0 2px; }
.a3 {
  grid-column: 2; background: #bebebe; border: 2px solid #217346; box-shadow: inset 0 0 0 1px #fff; position: relative;
}
.a3 i { position: absolute; right: -5px; bottom: -5px; width: 7px; height: 7px; background: #217346; border: 1px solid #fff; }
.row3 { grid-column: 3 / -1; border-bottom: 1px solid #000; }
.gray-a { grid-column: 2; grid-row: 5 / 17; background: #bebebe; }
.hd {
  background: #417aad; color: #fff; padding-left: 3px; line-height: 28px; white-space: nowrap;
  border-right: 1px solid #000; font-size: 19.500px;
}
.hb { border-left: 1px solid #000; }
.gray-r4 { grid-column: 10 / -1; border-bottom: 1px solid #a6a6a6; }
.orange {
  grid-column: 3 / 10; background: #f0ab00; color: #fff; line-height: 29px; padding-left: 2px; border-left: 1px solid #000; font-size: 19.800px;
}
.gray-r { grid-column: 10 / -1; grid-row: 7 / 17; }
.blank-b { grid-column: 3; grid-row: 7 / 17; background: #fff; border-left: 1px solid #000; border-top: 1px solid #000; }
.grp {
  grid-column: 4; background: #fff; border-right: 1px solid #000; border-bottom: 1px solid #000; border-left: 1px solid #000;
  padding: 1px 0 0 3px; line-height: 26px; white-space: nowrap;
}
.g1 { grid-row: 7; border-top: 1px solid #000; padding-top: 0; }
.g2 { grid-row: 8 / span 4; }
.g3 { grid-row: 12 / span 4; line-height: 25px; }
.g4 { grid-row: 16; }
.c {
  background: #fff; border-right: 1px solid #000; border-bottom: 1px solid #000;
  padding-left: 3.500px; line-height: 29px; white-space: nowrap; position: relative;
}
.cd { grid-column: 5; }
.ce { grid-column: 6; }
.cf { grid-column: 7; }
.cg { grid-column: 8; padding-left: 3px; }
.cx { grid-column: 9; }
.cg::before {
  content: ""; position: absolute; left: 0; top: 0; width: 9px; height: 9px; background: #0a7d0a; clip-path: polygon(0 0, 100% 0, 0 100%);
}

/* sheet tabs */
.sheetbar {
  height: 34px;
  background: #e6e6e6;
  border-top: 1px solid #a8a8a8;
  border-bottom: 1px solid #c8c8c8;
  display: flex;
  align-items: center;
  font-size: 18.300px;
  white-space: nowrap;
}
.sheetbar > * { flex: none; }
.nav-l { margin-left: 26px; }
.nav-r { margin-left: 29px; }
.bar-sep { margin-left: 48px; width: 1px; height: 30px; background: #b0b0b0; }
.stab {
  height: 28px; display: flex; align-items: center; justify-content: center; padding: 0 4px 4px 0;
}
.st-intro { margin-left: 2px; width: 139px; background: #fff; color: #333; }
.st-field { width: 109px; background: #fff; color: #217346; font-weight: 700; border-left: 1px solid #bbb; border-bottom: 2px solid #217346; }
.st-gen { margin-left: 5px; width: 138px; background: #ffcc00; color: #222; }
.st-txt { margin-left: 8px; width: 138px; background: #003366; color: #fff; }
.st-org { margin-left: 11px; width: 255px; background: #003366; color: #fff; overflow: hidden; justify-content: flex-start; padding: 0 0 4px 16px; }
.more { margin-left: 11px; width: 18px; color: #217346; font-weight: 700; line-height: 20px; }
.addsheet { margin-left: 9px; }
.vdots {
  width: 2px; height: 22px; margin-left: 23px;
  background-image: linear-gradient(#aaa 60%, transparent 60%); background-size: 2px 5px;
}
.hscroll { margin-left: 18px; width: 563px; height: 24px; background: #fff; border: 1px solid #8a8a8a; display: flex; }
.hs-btn { width: 24px; border-right: 1px solid #8a8a8a; display: flex; align-items: center; justify-content: center; }
.hs-end { margin-left: 36px; width: 24px; height: 24px; background: #fff; border: 1px solid #8a8a8a; display: flex; align-items: center; justify-content: center; }

/* status */
.status {
  height: 14px;
  background: #f3f2f1;
  display: flex;
  align-items: flex-start;
  font-size: 14.500px;
  overflow: hidden;
  color: #444;
  white-space: nowrap;
}
.status > * { flex: none; }
.st-ready { margin-left: 10px; width: 68px; line-height: 24px; margin-top: 6px; }
.st-acc { margin-top: 3px; }
.st-text { margin-left: 10px; width: 1130px; line-height: 24px; margin-top: 6px; }
.view { width: 60px; height: 14px; display: flex; justify-content: center; padding-top: 7px; }
.view-on { background: #d2d2d2; }
.knob2 { margin-left: 103px; width: 8px; height: 14px; margin-top: 8px; background: #666; }
.tick { margin-left: 81px; width: 1px; height: 8px; margin-top: 9px; background: #888; }

/* annotations */
.hl {
  position: absolute;
  border: 3px solid #f9434b;
  box-shadow: 2px 3px 4px rgba(0, 0, 0, .35), inset 2px 3px 5px rgba(0, 0, 0, .35);
}
.hl-main { left: 176px; top: 544px; width: 1108px; height: 268px; }
.hl-tab1 { left: 370px; top: 842px; width: 142px; height: 35px; box-shadow: 2px 3px 4px rgba(0, 0, 0, .35); }
.hl-tab2 { left: 665px; top: 841px; width: 270px; height: 34px; box-shadow: 2px 3px 4px rgba(0, 0, 0, .35); }
.cursor { position: absolute; left: 550px; top: 405px; }
```
